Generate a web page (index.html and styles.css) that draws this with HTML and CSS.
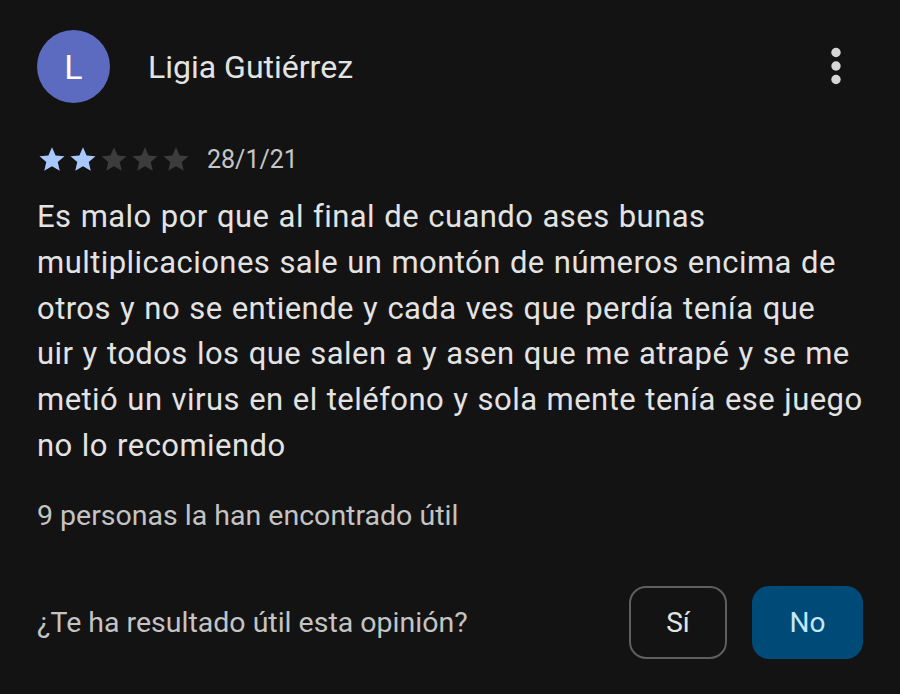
FILE: index.html
```html
<!DOCTYPE html>
<html lang="es">
<head>
    <meta charset="UTF-8">
    <meta name="viewport" content="width=device-width, initial-scale=1.0">
    <title>Opinión</title>
    <link rel="stylesheet" href="styles.css">
</head>
<body>

<div class="review">
    <!-- Cabecera: avatar, nombre y menú -->
    <div class="review-header">
        <div class="avatar">L</div>
        <div class="author">Ligia Gutiérrez</div>
        <div class="menu">
            <svg width="12" height="40" viewBox="0 0 12 40">
                <circle cx="6" cy="6.5" r="4.7" fill="#d6d6d6"/>
                <circle cx="6" cy="20" r="4.7" fill="#d6d6d6"/>
                <circle cx="6" cy="33.5" r="4.7" fill="#d6d6d6"/>
            </svg>
        </div>
    </div>

    <!-- Valoración y fecha -->
    <div class="rating">
        <div class="stars">
            <svg class="star on" viewBox="0 0 24 24"><path d="M12 2.5l2.9 6.6 7.1.6-5.4 4.7 1.6 7-6.2-3.7-6.2 3.7 1.6-7L2 9.7l7.1-.6z"/></svg>
            <svg class="star on" viewBox="0 0 24 24"><path d="M12 2.5l2.9 6.6 7.1.6-5.4 4.7 1.6 7-6.2-3.7-6.2 3.7 1.6-7L2 9.7l7.1-.6z"/></svg>
            <svg class="star" viewBox="0 0 24 24"><path d="M12 2.5l2.9 6.6 7.1.6-5.4 4.7 1.6 7-6.2-3.7-6.2 3.7 1.6-7L2 9.7l7.1-.6z"/></svg>
            <svg class="star" viewBox="0 0 24 24"><path d="M12 2.5l2.9 6.6 7.1.6-5.4 4.7 1.6 7-6.2-3.7-6.2 3.7 1.6-7L2 9.7l7.1-.6z"/></svg>
            <svg class="star" viewBox="0 0 24 24"><path d="M12 2.5l2.9 6.6 7.1.6-5.4 4.7 1.6 7-6.2-3.7-6.2 3.7 1.6-7L2 9.7l7.1-.6z"/></svg>
        </div>
        <span class="date">28/1/21</span>
    </div>

    <!-- Texto de la opinión -->
    <p class="review-text">Es malo por que al final de cuando ases bunas<br>
        multiplicaciones sale un montón de números encima de<br>
        otros y no se entiende y cada ves que perdía tenía que<br>
        uir y todos los que salen a y asen que me atrapé y se me<br>
        metió un virus en el teléfono y sola mente tenía ese juego<br>
        no lo recomiendo</p>

    <div class="helpful-count">9 personas la han encontrado útil</div>

    <!-- Pregunta de utilidad -->
    <div class="feedback">
        <span class="question">¿Te ha resultado útil esta opinión?</span>
        <div class="buttons">
            <button class="btn-yes">Sí</button>
            <button class="btn-no">No</button>
        </div>
    </div>
</div>

</body>
</html>
```

FILE: styles.css
```css
body {
    font-family: Roboto, "Noto Sans", sans-serif;
    margin: 0;
    height: 100vh;
    background-color: #131313;
    color: #e3e3e3;
}

.review {
    padding: 30px 37px 0 37px;
}

.review-header {
    display: flex;
    align-items: center;
    height: 73px;
}

.avatar {
    width: 73px;
    height: 73px;
    border-radius: 50%;
    background-color: #5c6bc0;
    color: white;
    font-size: 34px;
    display: flex;
    align-items: center;
    justify-content: center;
}

.author {
    margin-left: 38px;
    font-size: 32px;
    flex-grow: 1;
}

.menu {
    width: 24px;
    display: flex;
    justify-content: center;
    margin-right: 15px;
    padding-bottom: 1px;
}

.rating {
    display: flex;
    align-items: center;
    margin-top: 41px;
    height: 30px;
}

.stars {
    display: flex;
    gap: 1px;
}

.star {
    width: 30px;
    height: 30px;
    fill: #3c3c3c;
}

.star.on {
    fill: #a8c7fa;
}

.date {
    margin-left: 16px;
    font-size: 25px;
    color: #c6c6c6;
}

.review-text {
    margin: 20px -20px 0 0;
    font-size: 31px;
    line-height: 45.8px;
    letter-spacing: 0.45px;
    word-spacing: 1px;
    white-space: nowrap;
    color: #e3e3e3;
}

.helpful-count {
    margin-top: 30px;
    font-size: 28.5px;
    line-height: 34px;
    color: #c4c4c4;
}

.feedback {
    display: flex;
    align-items: center;
    justify-content: space-between;
    margin-top: 53px;
}

.question {
    font-size: 28.5px;
    color: #c4c4c4;
}

.buttons {
    display: flex;
    gap: 25px;
}

button {
    font-family: Roboto, "Noto Sans", sans-serif;
    font-size: 28px;
    height: 73px;
    border-radius: 17px;
    cursor: pointer;
}

.btn-yes {
    width: 98px;
    background-color: transparent;
    border: 2px solid #5f5f5f;
    color: #e3e3e3;
}

.btn-no {
    width: 111px;
    background-color: #004a77;
    border: none;
    color: #c2e7ff;
}
```
